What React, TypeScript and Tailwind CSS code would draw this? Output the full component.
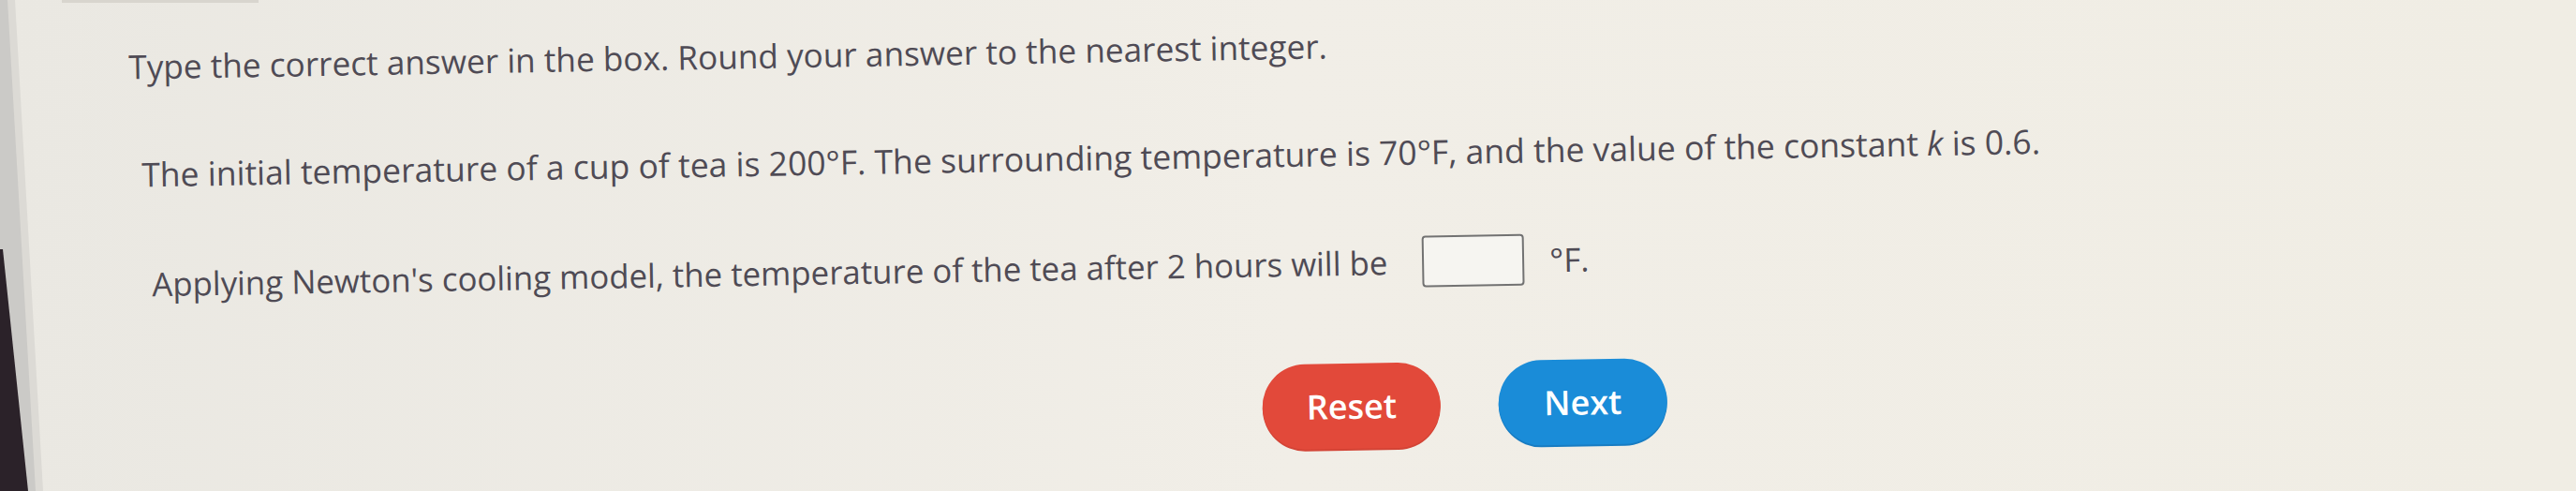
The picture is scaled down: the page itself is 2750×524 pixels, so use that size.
import React from 'react';

const FONT = { fontFamily: '"Open Sans", "Noto Sans", sans-serif' };

export default function App() {
  return (
    <div
      className="relative h-[524px] w-[2750px] overflow-hidden bg-gradient-to-r from-[#eae8e2] via-[#f1eee7] to-[#f0ede4]"
      style={FONT}
    >
      {/* Photo edge: monitor bezel at the left */}
      <svg className="absolute left-0 top-0" width="60" height="524" viewBox="0 0 60 524">
        <polygon points="0,0 16,0 46,524 0,524" fill="#dcdad5" />
        <polygon points="0,0 8,0 38,524 0,524" fill="#cbcac7" />
        <polygon points="0,266 3,266 30,524 0,524" fill="#2b2229" />
      </svg>
      <div className="absolute left-[66px] top-0 h-[3px] w-[210px] bg-[#d8d5ce]" />

      {/* Question content, slightly tilted like the photo */}
      <div className="-rotate-1 origin-top-left pt-[48px] text-[35.5px] font-medium leading-[50px] text-[#4f4b55]">
        <p className="pl-[136px] text-[35.2px]">
          Type the correct answer in the box. Round your answer to the nearest integer.
        </p>

        <p className="mt-[65px] pl-[148px]">
          The initial temperature of a cup of tea is 200°F. The surrounding temperature is 70°F, and the value of the
          constant <i>k</i> is 0.6.
        </p>

        <div className="mt-[65px] flex items-center pl-[157px] text-[34.8px]">
          <span>Applying Newton's cooling model, the temperature of the tea after 2 hours will be</span>
          <span className="ml-[37px] h-[55px] w-[109px] rounded-[4px] border-2 border-[#727272] bg-[#f6f5f1]" />
          <span className="ml-[27px]">°F.</span>
        </div>

        <div className="mt-[80px] flex gap-[62px] pl-[1340px]">
          <button className="h-[91px] w-[190px] rounded-full bg-[#e2493a] text-[36px] font-semibold text-white shadow-[0_2px_0_#d34436]">
            Reset
          </button>
          <button className="h-[91px] w-[180px] rounded-full bg-[#1a8cd8] text-[36px] font-semibold text-white shadow-[0_2px_0_#187cc2]">
            Next
          </button>
        </div>
      </div>
    </div>
  );
}
